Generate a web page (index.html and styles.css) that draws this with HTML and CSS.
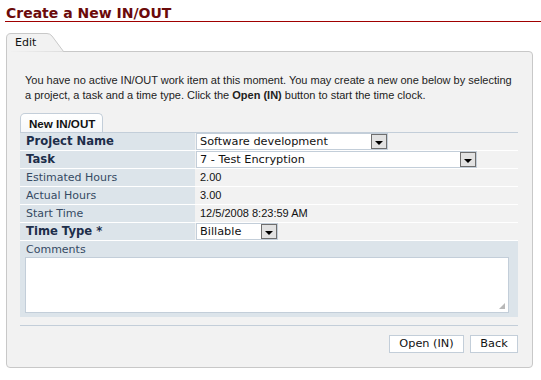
FILE: index.html
```html
<!DOCTYPE html>
<html>
<head>
<meta charset="utf-8">
<link rel="stylesheet" href="styles.css">
</head>
<body>
<h1 class="title">Create a New IN/OUT</h1>
<div class="tabs">
  <div class="tab">
    <svg class="tab-bg" width="58" height="19" viewBox="0 0 58 19">
      <path d="M0.5 19 V5 Q0.5 0.5 5 0.5 H41 Q44 0.5 46 3 L57.5 18.5" fill="#f2f2f2" stroke="#c8c8c8"/>
    </svg>
    <span class="tab-label">Edit</span>
  </div>
</div>
<div class="panel">
  <p class="intro">You have no active IN/OUT work item at this moment. You may create a new one below by selecting a project, a task and a time type. Click the <b>Open (IN)</b> button to start the time clock.</p>
  <div class="subtabs"><div class="subtab">New IN/OUT</div></div>
  <div class="form">
    <div class="row">
      <div class="label strong">Project Name</div>
      <div class="value"><div class="select w-project"><span>Software development</span><i class="drop"></i></div></div>
    </div>
    <div class="row">
      <div class="label strong">Task</div>
      <div class="value"><div class="select w-task"><span>7 - Test Encryption</span><i class="drop"></i></div></div>
    </div>
    <div class="row">
      <div class="label">Estimated Hours</div>
      <div class="value plain">2.00</div>
    </div>
    <div class="row">
      <div class="label">Actual Hours</div>
      <div class="value plain">3.00</div>
    </div>
    <div class="row">
      <div class="label">Start Time</div>
      <div class="value plain">12/5/2008 8:23:59 AM</div>
    </div>
    <div class="row">
      <div class="label strong">Time Type *</div>
      <div class="value"><div class="select w-type"><span>Billable</span><i class="drop"></i></div></div>
    </div>
    <div class="comments">
      <div class="comments-label">Comments</div>
      <div class="textarea"><i class="grip"></i></div>
    </div>
  </div>
  <div class="actions">
    <button class="btn">Open (IN)</button>
    <button class="btn">Back</button>
  </div>
</div>
</body>
</html>
```

FILE: styles.css
```css
html, body { margin: 0; padding: 0; background: #fff; }
body { width: 541px; height: 380px; overflow: hidden; font-family: "Liberation Sans", Arial, sans-serif; font-size: 11px; color: #222; }

.title {
  margin: 0 0 0 5px;
  padding: 5px 0 0 1px;
  height: 16px;
  border-bottom: 1px solid #a00000;
  font-family: "DejaVu Sans", Verdana, sans-serif;
  font-size: 14px;
  font-weight: bold;
  line-height: 16px;
  color: #6b0a0a;
}

.tabs { margin: 11px 0 0 6px; height: 19px; display: flex; }
.tab { position: relative; width: 58px; height: 19px; }
.tab-bg { position: absolute; left: 0; top: 0; }
.tab-label { position: relative; display: block; padding: 3px 0 0 9px; font-family: "DejaVu Sans", Verdana, sans-serif; font-size: 11px; line-height: 14px; color: #111; }

.panel {
  margin: -1px 8px 0 6px;
  height: 317px;
  background: #f2f2f2;
  border: 1px solid #c8c8c8;
  border-radius: 0 4px 4px 4px;
  padding: 0 14px 0 13px;
  box-sizing: border-box;
}

.intro { margin: 0; padding: 21px 0 0 5px; line-height: 15px; color: #222; }
.intro b { font-weight: bold; }

.subtabs { margin-top: 10px; height: 19px; display: flex; }
.subtab {
  padding: 0 7px 0 8px;
  height: 19px;
  line-height: 19px;
  background: linear-gradient(#fff, #f6f8fa);
  border: 1px solid #c3ced9;
  border-bottom: none;
  border-radius: 5px 5px 0 0;
  font-size: 11.6px;
  font-weight: bold;
  color: #111;
  box-sizing: border-box;
}

.form { border-top: 1px solid #c3ced9; }
.row { display: flex; height: 18px; border-top: 1px solid #fff; box-sizing: border-box; }
.row:first-child { border-top: none; height: 17px; }
.label {
  width: 175px;
  flex: none;
  background: #dce4ea;
  padding-left: 6px;
  box-sizing: border-box;
  font-family: "DejaVu Sans", Verdana, sans-serif;
  font-size: 11px;
  line-height: 17px;
  color: #354a63;
}
.label.strong { font-weight: bold; font-size: 11.6px; color: #1d2e4a; }
.value { flex: 1; padding-left: 1px; }
.value.plain { padding-left: 5px; line-height: 17px; color: #111; }

.select {
  position: relative;
  height: 17px;
  background: #fff;
  border: 1px solid #c3ced9;
  box-sizing: border-box;
  font-family: "DejaVu Sans", Verdana, sans-serif;
  font-size: 11.3px;
  line-height: 15px;
  color: #111;
  padding-left: 3px;
}
.w-project { width: 192px; }
.w-task { width: 281px; }
.w-type { width: 82px; }
.drop {
  position: absolute;
  right: 0;
  top: 0;
  width: 16px;
  height: 15px;
  background: #e2e2e2;
  border: 1px solid #6e6e6e;
  box-sizing: border-box;
}
.drop::after {
  content: "";
  position: absolute;
  left: 3px;
  top: 6px;
  border-left: 4px solid transparent;
  border-right: 4px solid transparent;
  border-top: 4px solid #000;
}

.comments { background: #dce4ea; border-top: 1px solid #fff; padding: 0 9px 4px 5px; height: 77px; box-sizing: border-box; }
.comments-label { font-family: "DejaVu Sans", Verdana, sans-serif; font-size: 11px; padding-top: 2px; line-height: 14px; color: #354a63; padding-left: 1px; }
.textarea { position: relative; height: 56px; background: #fff; border: 1px solid #c3ced9; box-sizing: border-box; }
.grip {
  position: absolute; right: 3px; bottom: 3px; width: 6px; height: 6px;
  background:
    radial-gradient(circle, #b8b8b8 0.8px, transparent 1px) 0 0 / 2px 2px;
  clip-path: polygon(100% 0, 100% 100%, 0 100%);
}

.actions {
  margin-top: 8px;
  border-top: 1px solid #c3ced9;
  padding-top: 9px;
  display: flex;
  justify-content: flex-end;
  gap: 6px;
}
.btn {
  height: 18px;
  padding: 0 8px;
  background: #fff;
  border: 1px solid #c3ced9;
  font-family: "DejaVu Sans", Verdana, sans-serif;
  font-size: 11.3px;
  line-height: 16px;
  color: #111;
}
.btn:first-child { width: 75px; }
.btn:last-child { width: 48px; }
```
